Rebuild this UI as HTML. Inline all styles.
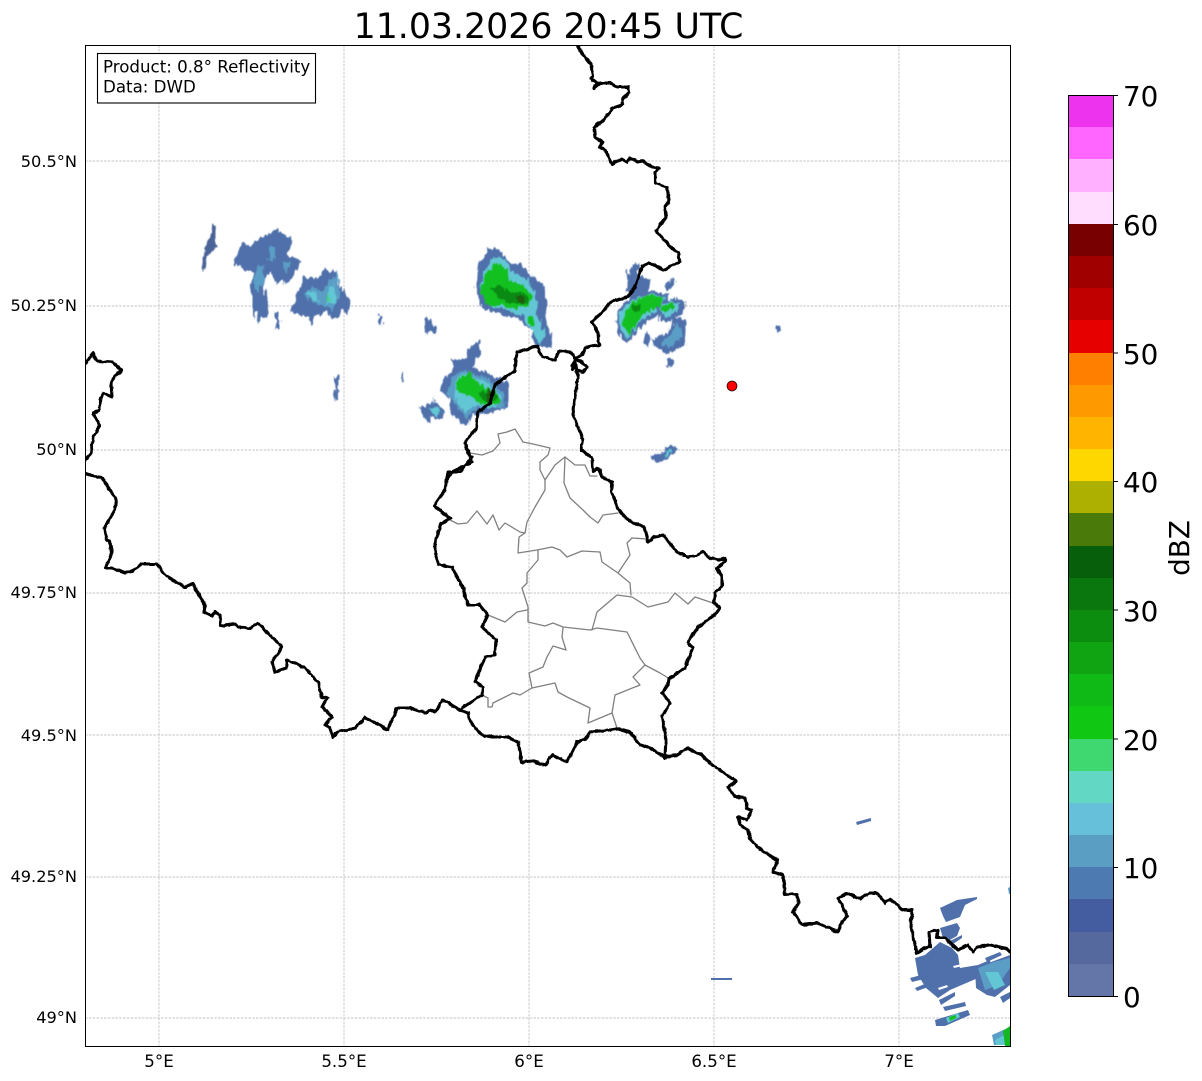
<!DOCTYPE html>
<html><head><meta charset="utf-8"><title>Radar</title>
<style>
html,body{margin:0;padding:0;background:#fff;width:1202px;height:1081px;overflow:hidden}
svg{display:block;font-family:"DejaVu Sans","Liberation Sans",sans-serif}
.g{stroke:#b4b4b4;stroke-width:.7;stroke-dasharray:2.6 1.2;fill:none}
.b{fill:none;stroke:#000;stroke-width:3.1;stroke-linejoin:round;stroke-linecap:round}
.c{fill:none;stroke:#808080;stroke-width:1.3;stroke-linejoin:round;stroke-linecap:round}
.t{font-size:16.67px;fill:#000}
.k{font-size:27.8px;fill:#000}
.l{fill:#4f70aa}.m{fill:#5a9ec6}.n{fill:#62c6d4}.o{fill:#12c020}.p{fill:#0a8a12}.q{fill:#4a6398}
</style></head><body>
<svg width="1202" height="1081" viewBox="0 0 1202 1081" xmlns="http://www.w3.org/2000/svg" shape-rendering="geometricPrecision">
<defs>
<clipPath id="ax"><rect x="85" y="45" width="925" height="1001"/></clipPath>
<filter id="s" filterUnits="userSpaceOnUse" x="85" y="45" width="925" height="1001" color-interpolation-filters="sRGB">
<feTurbulence type="fractalNoise" baseFrequency="0.32 0.1" numOctaves="2" seed="4" result="n"/>
<feDisplacementMap in="SourceGraphic" in2="n" scale="8" xChannelSelector="R" yChannelSelector="G" result="d"/>
<feGaussianBlur in="d" stdDeviation=".4"/>
</filter>
<filter id="h" filterUnits="userSpaceOnUse" x="85" y="45" width="925" height="1001"><feGaussianBlur stdDeviation=".35"/></filter>
<filter id="w" filterUnits="userSpaceOnUse" x="85" y="45" width="925" height="1001" color-interpolation-filters="sRGB">
<feTurbulence type="fractalNoise" baseFrequency="0.16" numOctaves="2" seed="9" result="n"/>
<feDisplacementMap in="SourceGraphic" in2="n" scale="3" xChannelSelector="R" yChannelSelector="G" result="d"/>
<feGaussianBlur in="d" stdDeviation=".3"/>
</filter>
</defs>
<text x="548.500" y="38" text-anchor="middle" font-size="34.72" fill="#000">11.03.2026 20:45 UTC</text>

<g class="g">
<path d="M159 45V1046M344 45V1046M529 45V1046M714 45V1046M899 45V1046"/>
<path d="M85 161H1010M85 306H1010M85 450H1010M85 593H1010M85 735H1010M85 877H1010M85 1018H1010"/>
</g>

<g clip-path="url(#ax)">
<g filter="url(#s)">
<!-- West -->
<polygon class="q" points="213,225 216,226 215,240 218,246 212,252 207,258 204,270 201,270 203,258 207,243"/>
<polygon class="l" points="233,263 242,243 252,245 260,238 272,234 277,227 280,232 292,238 288,255 302,262 293,275 287,287 283,280 277,285 270,273 263,282 268,307 267,317 262,316 258,325 255,312 252,307 252,273 240,268"/>
<polygon class="m" points="254,275 260,265 265,264 264,280 258,292 254,287"/>
<polygon class="m" points="270,247 276,246 274,262 268,260"/>
<polygon class="m" points="283,262 289,261 288,272 284,272"/>
<rect class="l" x="276" y="312" width="4" height="16"/>
<polygon class="l" points="291,311 303,277 320,278 324,268 329,272 337,270 340,287 350,298 348,313 341,308 338,318 331,318 327,310 315,318 311,325 309,317"/>
<polygon class="m" points="303,296 312,287 322,292 332,278 338,272 340,295 333,310 325,306 318,305 310,300"/>
<polygon class="n" points="306,293 316,291 318,303 310,298"/>
<polygon class="n" points="328,290 335,283 335,303 326,306"/>
<polygon fill="#3fd870" points="327,296 330,293 331,303 326,303"/>
<rect class="l" x="379" y="315" width="3" height="10"/>
<polygon class="l" points="334,377 339,377 339,390 337,402 335,402"/>
<rect class="l" x="402" y="372" width="2" height="11"/>
<polygon class="l" points="424,319 431,319 433,325 436,328 435,332 428,331 428,335 426,331 424,327"/>
<!-- Central upper -->
<polygon class="l" points="488,248 500,250 510,262 522,265 533,278 543,285 547,300 545,317 552,337 551,347 545,347 533,343 532,330 517,317 500,315 482,308 475,288 478,268"/>
<polygon class="n" points="482,275 493,256 505,260 513,272 528,279 536,296 537,312 545,335 540,345 535,335 522,316 505,309 490,307 480,292"/>
<polygon class="o" points="480,292 486,275 496,263 506,268 508,280 522,285 533,296 529,306 514,309 500,305 489,307"/>
<polygon class="p" points="490,288 500,285 510,292 522,292 530,300 524,306 512,303 498,298"/>
<polygon fill="#1f5c10" points="515,295 524,296 526,304 518,305"/>
<polygon class="o" points="527,316 532,317 535,325 531,326"/>
<!-- Central lower -->
<polygon class="l" points="452,360 467,358 468,348 480,340 480,353 472,367 492,375 508,382 508,407 493,412 472,415 468,425 462,425 460,420 450,413 450,397 440,392 442,380 452,373"/>
<polygon class="m" points="452,378 465,370 490,380 505,395 503,408 478,408 466,418 455,405 448,392"/>
<polygon class="n" points="453,382 466,373 488,383 502,398 496,407 476,405 465,412 456,402"/>
<polygon class="o" points="455,382 470,372 478,384 495,392 502,403 482,405 472,396 458,392"/>
<polygon class="p" points="478,392 492,390 498,398 490,404 482,400"/>
<polygon fill="#1f5c10" points="487,390 491,390 490,403 487,402"/>
<polygon class="l" points="420,407 433,402 433,395 434,402 445,410 443,419 430,418 430,423 428,423 422,415"/>
<polygon class="n" points="430,408 438,407 442,413 436,417 431,414"/>
<!-- East -->
<polygon class="l" points="628,270 636,265 637,272 652,281 648,292 640,296 630,302 627,290"/>
<polygon class="l" points="633,265 639,264 640,270 633,274"/>
<polygon class="l" points="665,288 672,278 675,280 669,291"/>
<polygon class="l" points="618,310 632,296 650,291 669,294 665,310 647,322 637,332 627,344 620,337 615,322"/>
<polygon class="n" points="620,312 632,300 650,294 666,297 662,308 645,317 636,327 627,340 620,330"/>
<polygon class="o" points="622,316 634,301 648,295 664,297 660,307 644,313 636,324 628,336"/>
<polygon class="p" points="632,306 640,303 640,310 633,312"/>
<polygon class="l" points="657,308 673,298 685,301 683,313 668,322 659,321"/>
<polygon class="n" points="659,308 672,300 681,303 677,311 664,319"/>
<polygon class="o" points="660,309 672,301 677,305 665,313"/>
<polygon class="l" points="673,316 685,320 687,335 684,345 668,354 656,347 652,340 664,334 671,328"/>
<polygon class="m" points="676,323 682,327 681,338 668,348 660,343 672,333"/>
<polygon class="l" points="644,344 647,330 651,340 649,346"/>
<polygon class="l" points="666,358 671,358 674,364 670,369 667,366"/>
<polygon class="l" points="776,327 780,325 781,331 777,332"/>
<polygon class="l" points="649,455 661,454 665,448 672,445 678,449 670,458 660,462 653,461"/>
<polygon class="n" points="664,455 671,449 673,452 667,457"/>
</g>
<g filter="url(#h)">
<polygon class="l" points="856,822 871,818 871,821 857,825"/>
<rect class="l" x="711" y="978" width="21" height="2"/>
<!-- South east -->
<polygon class="l" points="940,908 957,900 977,897 977,899 965,905 960,917 946,922 943,916"/>
<polygon class="l" points="940,908 950,905 950,907 942,910"/>
<polygon class="l" points="940,928 957,923 960,928 957,936 948,941 943,938"/>
<polygon class="l" points="948,942 962,935 962,938 950,946"/>
<polygon class="l" points="915,958 925,955 940,942 952,948 958,955 960,968 978,965 990,960 992,972 950,990 938,998 926,988 918,975"/>
<polygon class="l" points="910,978 925,974 928,978 912,982"/>
<polygon class="l" points="915,988 932,981 934,985 917,991"/>
<polygon class="l" points="939,1000 955,992 955,996 941,1005"/>
<polygon fill="#fff" points="953,966 962,964 963,966 954,968"/>
<polygon fill="#fff" points="938,988 947,985 948,987 939,990"/>
<polygon class="l" points="975,968 1010,955 1010,985 995,997 987,995 976,988"/>
<polygon class="l" points="985,958 1000,952 1002,955 987,962"/>
<polygon class="m" points="978,968 994,962 1010,958 1010,968 998,985 985,990"/>
<polygon class="n" points="985,972 998,972 1005,985 994,990"/>
<polygon class="l" points="1000,997 1010,992 1010,998 1003,1003"/>
<polygon class="l" points="935,1020 968,1010 970,1015 945,1026 936,1026"/>
<polygon class="l" points="943,1007 965,1002 966,1006 945,1011"/>
<polygon class="n" points="946,1018 958,1013 960,1017 948,1023"/>
<polygon class="o" points="949,1017 956,1015 956,1018 950,1021"/>
<polygon class="m" points="992,1035 1010,1027 1010,1045 994,1045"/>
<polygon class="n" points="995,1040 1008,1033 1008,1045 996,1045"/>
<polygon fill="#12b820" points="1003,1031 1010,1026 1010,1046 1005,1046"/>
<polygon class="m" points="1008,888 1010,887 1010,894 1009,894"/>
</g>

<!-- Cantons -->
<g class="c">
<path d="M470 453L482 455 493 451 500 443 498 434 507 432 515 429 523 442 533 444 550 448 548 455 540 462 540 470 545 480"/>
<path d="M545 480L555 465 565 457 564 483 570 498 583 510 590 517 598 523 603 515 618 513"/>
<path d="M565 457L575 465 585 465 590 476 597 476"/>
<path d="M545 480V490L535 507 527 522 525 533 519 537 518 553 537 550 552 547 560 550 567 557 582 551 600 552 602 562 618 573 630 583 631 595"/>
<path d="M450 520L458 524 467 523 477 511 487 524 493 515 499 530 505 523 520 532 525 533"/>
<path d="M538 550V560L527 573V583L522 588 528 607V622L545 626 553 623 563 627 590 630 597 628 627 632 640 658 645 665 660 673 670 679"/>
<path d="M488 615L505 622 517 612 527 610"/>
<path d="M592 630L597 612 617 595 632 597 648 607 668 602 675 593 688 604 695 597 713 603"/>
<path d="M618 573L630 555 627 543 632 538 647 539"/>
<path d="M563 628L562 637 566 650 553 646 547 657 543 667 529 673 532 688 555 683 558 692 567 697 590 708 588 723 612 713 617 728"/>
<path d="M645 665L633 677 640 685 615 695 612 713"/>
<path d="M532 688L520 695 513 693 493 703 492 707 488 707 488 698 482 695"/>
</g>

<!-- Borders -->
<g class="b" filter="url(#w)">
<path d="M578 46L583 55 591 65 593 77 591 78 596 83 594 88 600 83 610 83 618 87 628 87 629 92 623 98 622 105 613 108 603 120 594 128 595 137 603 142 599 147 605 150 612 164 622 159 627 162 630 158 637 162 643 161 652 167 659 168 655 172 655 183 667 187 669 200 665 208 666 217 656 231 667 243 678 253 680 262 663 270 650 263 642 267 635 287 628 297 610 302 602 313 592 322 598 333 599 345 585 348 582 355 576 358 572 366 583 373 587 367 582 362 575 360 578 377 575 397 573 415 578 427 583 440 581 450 592 458 593 472 598 468 602 477 612 482 611 492 615 500 617 508 628 520 644 527 648 542 655 537 663 535 677 552 687 557 695 556 703 552 710 558 718 560 725 558 725 562 717 568 722 577 722 587 715 592 714 603 720 608 715 615 698 627 688 642 693 647 685 668 669 679 668 685 662 693 670 703 662 717 666 737 665 758"/>
<path d="M447 480L452 472 462 467 472 462 465 443 477 427 478 412 490 403 495 385 515 370 517 352 538 346 542 357 555 360 559 351 570 352 575 358 573 370"/>
<path d="M472 457L460 472 448 472 445 490 434 506 450 518 440 525 435 543 435 553 439 565 452 567 463 588 468 605 480 605 488 615 482 627 496 640 495 655 485 657 475 682 483 687 482 695 462 708"/>
<path d="M86 363L93 353 97 361 113 362 121 370 111 382 112 397 103 393 100 400 100 410 93 413 100 426 93 437 91 453 86 459"/>
<path d="M86 474L102 478 110 490 116 498 115 510 104 528 107 540 110 542 112 553 105 568 112 568 125 573 133 571 142 564 157 564 166 576 185 587 193 584 205 605 204 612 212 616 215 612 220 615 221 626 235 624 238 627 250 628 258 623 282 647 272 662 275 672 286 668 287 660 305 668 318 682 322 697 327 698 322 707 332 717 325 725 330 728 333 737 338 732 355 728 365 718 380 725 388 730 397 708 410 708 425 713 430 710 435 712 443 700 460 710 468 713 470 722 482 735 492 737 508 737 518 742 522 762 532 761 545 765 552 755 567 762 577 742 585 740 590 732 618 729 630 732 640 745 650 748 665 757 677 755 687 748 702 755 710 763 723 772 736 781 728 787 735 797 745 798 747 808 752 810 747 820 738 817 740 825 748 830 750 838 757 847 777 860 773 872 783 875 785 895 797 894 799 903 793 912 802 925 817 923 838 932 842 922 847 917 843 907 838 898 847 893 860 899 870 893 877 893 885 903 890 899 903 910 912 910 911 927 917 953 925 948 930 947 929 932 938 930 937 938 945 938 958 950 968 945 973 952 978 947 988 945 1007 949 1010 952"/>
</g>
<circle cx="732" cy="386" r="5" fill="#f00" stroke="#000" stroke-width=".7"/>
</g>

<rect x="85.5" y="45.5" width="925" height="1001" fill="none" stroke="#000" stroke-width="1"/>

<rect x="97.5" y="53.5" width="218" height="49.5" fill="#fff" stroke="#000" stroke-width="1.1"/>
<text class="t" x="103" y="72.5">Product: 0.8° Reflectivity</text>
<text class="t" x="103" y="92.5">Data: DWD</text>

<g class="t" text-anchor="end" style="font-size:16.2px">
<text x="77" y="167">50.5°N</text>
<text x="77" y="311">50.25°N</text>
<text x="77" y="455">50°N</text>
<text x="77" y="598">49.75°N</text>
<text x="77" y="741">49.5°N</text>
<text x="77" y="882">49.25°N</text>
<text x="77" y="1023">49°N</text>
</g>
<g class="t" text-anchor="middle">
<text x="159" y="1067">5°E</text>
<text x="344" y="1067">5.5°E</text>
<text x="529" y="1067">6°E</text>
<text x="714" y="1067">6.5°E</text>
<text x="899" y="1067">7°E</text>
</g>

<!-- Colorbar -->
<g shape-rendering="crispEdges">
<rect x="1068" y="95" width="45" height="33" fill="#ee33ee"/>
<rect x="1068" y="127" width="45" height="33" fill="#ff66ff"/>
<rect x="1068" y="159" width="45" height="33" fill="#ffb0ff"/>
<rect x="1068" y="192" width="45" height="33" fill="#ffddff"/>
<rect x="1068" y="224" width="45" height="33" fill="#780000"/>
<rect x="1068" y="256" width="45" height="33" fill="#a00000"/>
<rect x="1068" y="288" width="45" height="33" fill="#c00000"/>
<rect x="1068" y="320" width="45" height="33" fill="#e60000"/>
<rect x="1068" y="353" width="45" height="33" fill="#ff8000"/>
<rect x="1068" y="385" width="45" height="33" fill="#ff9900"/>
<rect x="1068" y="417" width="45" height="33" fill="#ffb400"/>
<rect x="1068" y="449" width="45" height="33" fill="#ffd700"/>
<rect x="1068" y="481" width="45" height="33" fill="#aeb000"/>
<rect x="1068" y="513" width="45" height="33" fill="#4a7a0a"/>
<rect x="1068" y="546" width="45" height="33" fill="#075e0b"/>
<rect x="1068" y="578" width="45" height="33" fill="#0a760e"/>
<rect x="1068" y="610" width="45" height="33" fill="#0d8d10"/>
<rect x="1068" y="642" width="45" height="33" fill="#10a412"/>
<rect x="1068" y="674" width="45" height="33" fill="#10ba16"/>
<rect x="1068" y="706" width="45" height="33" fill="#10c714"/>
<rect x="1068" y="739" width="45" height="33" fill="#3fd870"/>
<rect x="1068" y="771" width="45" height="33" fill="#62d8c4"/>
<rect x="1068" y="803" width="45" height="33" fill="#67c0da"/>
<rect x="1068" y="835" width="45" height="33" fill="#5b9ec4"/>
<rect x="1068" y="867" width="45" height="33" fill="#4c7ab1"/>
<rect x="1068" y="899" width="45" height="33" fill="#435da0"/>
<rect x="1068" y="932" width="45" height="33" fill="#55699f"/>
<rect x="1068" y="964" width="45" height="32" fill="#6476a8"/>
</g>
<rect x="1068.5" y="95.5" width="45" height="901" fill="none" stroke="#000" stroke-width="1"/>
<path d="M1113 95.5h5M1113 224.5h5M1113 353h5M1113 481.500h5M1113 610h5M1113 739h5M1113 867.500h5M1113 996.500h5" stroke="#000" stroke-width="1"/>
<g class="k">
<text x="1123" y="106">70</text>
<text x="1123" y="235">60</text>
<text x="1123" y="364">50</text>
<text x="1123" y="492">40</text>
<text x="1123" y="621">30</text>
<text x="1123" y="750">20</text>
<text x="1123" y="878">10</text>
<text x="1123" y="1007">0</text>
</g>
<text class="k" transform="translate(1189,548) rotate(-90)" text-anchor="middle">dBZ</text>
</svg>
</body></html>
